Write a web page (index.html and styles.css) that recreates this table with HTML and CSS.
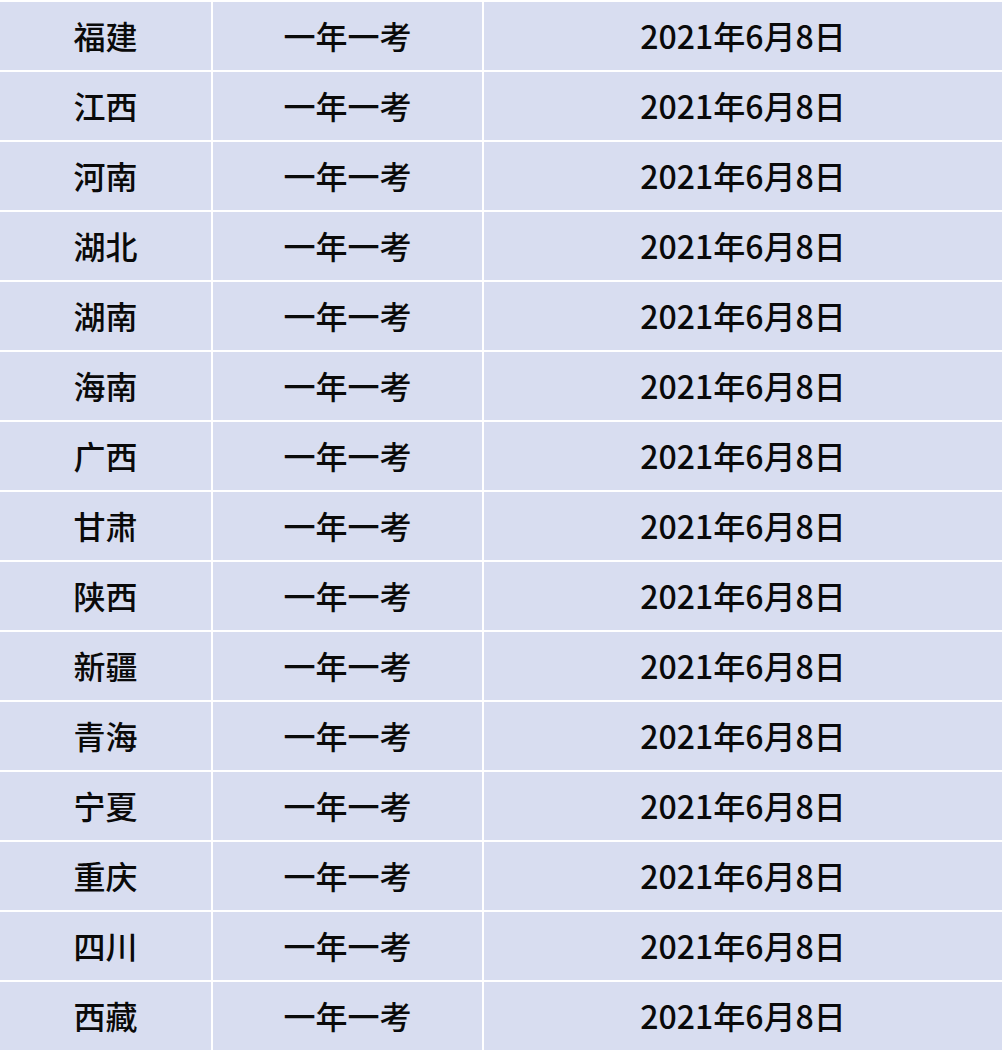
FILE: index.html
```html
<!DOCTYPE html>
<html lang="zh-CN">
<head>
<meta charset="utf-8">
<title>高考时间表</title>
<link rel="stylesheet" href="styles.css">
</head>
<body>
<div class="table">
  <div class="cell">福建</div><div class="cell">一年一考</div><div class="cell">2021年6月8日</div>
  <div class="cell">江西</div><div class="cell">一年一考</div><div class="cell">2021年6月8日</div>
  <div class="cell">河南</div><div class="cell">一年一考</div><div class="cell">2021年6月8日</div>
  <div class="cell">湖北</div><div class="cell">一年一考</div><div class="cell">2021年6月8日</div>
  <div class="cell">湖南</div><div class="cell">一年一考</div><div class="cell">2021年6月8日</div>
  <div class="cell">海南</div><div class="cell">一年一考</div><div class="cell">2021年6月8日</div>
  <div class="cell">广西</div><div class="cell">一年一考</div><div class="cell">2021年6月8日</div>
  <div class="cell">甘肃</div><div class="cell">一年一考</div><div class="cell">2021年6月8日</div>
  <div class="cell">陕西</div><div class="cell">一年一考</div><div class="cell">2021年6月8日</div>
  <div class="cell">新疆</div><div class="cell">一年一考</div><div class="cell">2021年6月8日</div>
  <div class="cell">青海</div><div class="cell">一年一考</div><div class="cell">2021年6月8日</div>
  <div class="cell">宁夏</div><div class="cell">一年一考</div><div class="cell">2021年6月8日</div>
  <div class="cell">重庆</div><div class="cell">一年一考</div><div class="cell">2021年6月8日</div>
  <div class="cell">四川</div><div class="cell">一年一考</div><div class="cell">2021年6月8日</div>
  <div class="cell">西藏</div><div class="cell">一年一考</div><div class="cell">2021年6月8日</div>
</div>
</body>
</html>
```
FILE: styles.css
```css
html, body {
  margin: 0;
  padding: 0;
  background: #ffffff;
}
.table {
  display: grid;
  grid-template-columns: 211px 269px 518px;
  grid-auto-rows: 68px;
  gap: 2px;
  padding-top: 2px;
  width: 1002px;
  background: #ffffff;
}
.cell {
  display: flex;
  align-items: center;
  justify-content: center;
  background: #d8ddf0;
  color: #0a0a0a;
  font-family: "Noto Sans CJK SC", "Noto Sans", sans-serif;
  font-size: 32px;
  font-weight: 500;
  line-height: 1;
  padding-bottom: 2px;
  box-sizing: border-box;
}
```
